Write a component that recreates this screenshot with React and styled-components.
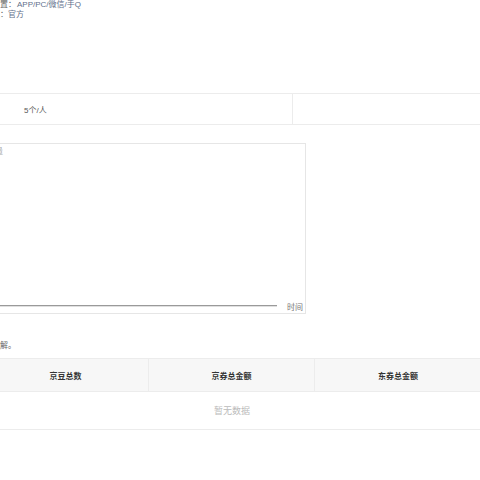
import React from 'react'
import styled, { createGlobalStyle } from 'styled-components'

const Global = createGlobalStyle`
  html, body {
    margin: 0;
    padding: 0;
    background: #fff;
    overflow: hidden;
  }
  * {
    box-sizing: border-box;
    font-family: "Liberation Sans", "Noto Sans CJK SC", sans-serif;
  }
`;

const Page = styled.div`
  width: 498px;
  margin-left: -17px;
  font-size: 8px;
  color: #666;
`;

const InfoRow = styled.div`
  height: 10px;
  line-height: 10px;
  white-space: nowrap;
  margin-left: ${p => p.indent}px;
`;

const InfoLabel = styled.span`
  color: #666;
`;

const InfoValue = styled.span`
  color: #5f6f8a;
  margin-left: ${p => p.gap || 0}px;
`;

const StatsRow = styled.div`
  margin-top: 73px;
  display: flex;
  height: 32px;
  border-top: 1px solid #ececec;
  border-bottom: 1px solid #ececec;
`;

const StatsCell = styled.div`
  width: ${p => p.w}px;
  display: flex;
  align-items: center;
  padding-left: ${p => p.pad || 0}px;
  color: #555;
  border-right: ${p => (p.last ? 'none' : '1px solid #ececec')};
`;

const ChartBox = styled.div`
  margin-top: 18px;
  width: 323px;
  height: 171px;
  border: 1px solid #e6e6e6;
  display: flex;
  flex-direction: column;
  padding: 3px 2px 1px 0;
`;

const AxisTitle = styled.div`
  font-size: 8px;
  color: #aaa;
  line-height: 10px;
  margin-left: 3px;
  white-space: nowrap;
`;

const ChartSpace = styled.div`
  flex: 1;
`;

const AxisRow = styled.div`
  display: flex;
  align-items: center;
  gap: 10px;
  height: 12px;
`;

const AxisLine = styled.div`
  flex: 1;
  height: 2px;
  background: #9a9a9a;
  border-bottom: 1px solid #e0e0e0;
`;

const AxisLabel = styled.span`
  font-size: 8px;
  color: #777;
`;

const Note = styled.div`
  margin-top: 26px;
  height: 12px;
  line-height: 12px;
  margin-left: 9px;
  color: #666;
  white-space: nowrap;
`;

const Table = styled.div`
  margin-top: 6px;
  width: 498px;
  border-top: 1px solid #ececec;
  border-bottom: 1px solid #ececec;
`;

const HeadRow = styled.div`
  display: grid;
  grid-template-columns: repeat(3, 1fr);
  height: 33px;
  background: #f7f7f7;
  border-bottom: 1px solid #ececec;
`;

const HeadCell = styled.div`
  display: flex;
  align-items: center;
  justify-content: center;
  font-weight: bold;
  color: #333;
  border-right: ${p => (p.last ? 'none' : '1px solid #ececec')};
`;

const EmptyRow = styled.div`
  height: 37px;
  display: flex;
  align-items: center;
  justify-content: center;
  font-size: 9px;
  color: #bbb;
`;

export default function App() {
  return (
    <>
      <Global />
      <Page>
        <InfoRow indent={-7}>
          <InfoLabel>投放位置：</InfoLabel>
          <InfoValue gap={1}>APP/PC/微信/手Q</InfoValue>
        </InfoRow>
        <InfoRow indent={1}>
          <InfoLabel>来源：</InfoLabel>
          <InfoValue>官方</InfoValue>
        </InfoRow>

        <StatsRow>
          <StatsCell w={310} pad={41}>5个/人</StatsCell>
          <StatsCell w={188} last />
        </StatsRow>

        <ChartBox>
          <AxisTitle>数量</AxisTitle>
          <ChartSpace />
          <AxisRow>
            <AxisLine />
            <AxisLabel>时间</AxisLabel>
          </AxisRow>
        </ChartBox>

        <Note>了解。</Note>

        <Table>
          <HeadRow>
            <HeadCell>京豆总数</HeadCell>
            <HeadCell>京券总金额</HeadCell>
            <HeadCell last>东券总金额</HeadCell>
          </HeadRow>
          <EmptyRow>暂无数据</EmptyRow>
        </Table>
      </Page>
    </>
  )
}
